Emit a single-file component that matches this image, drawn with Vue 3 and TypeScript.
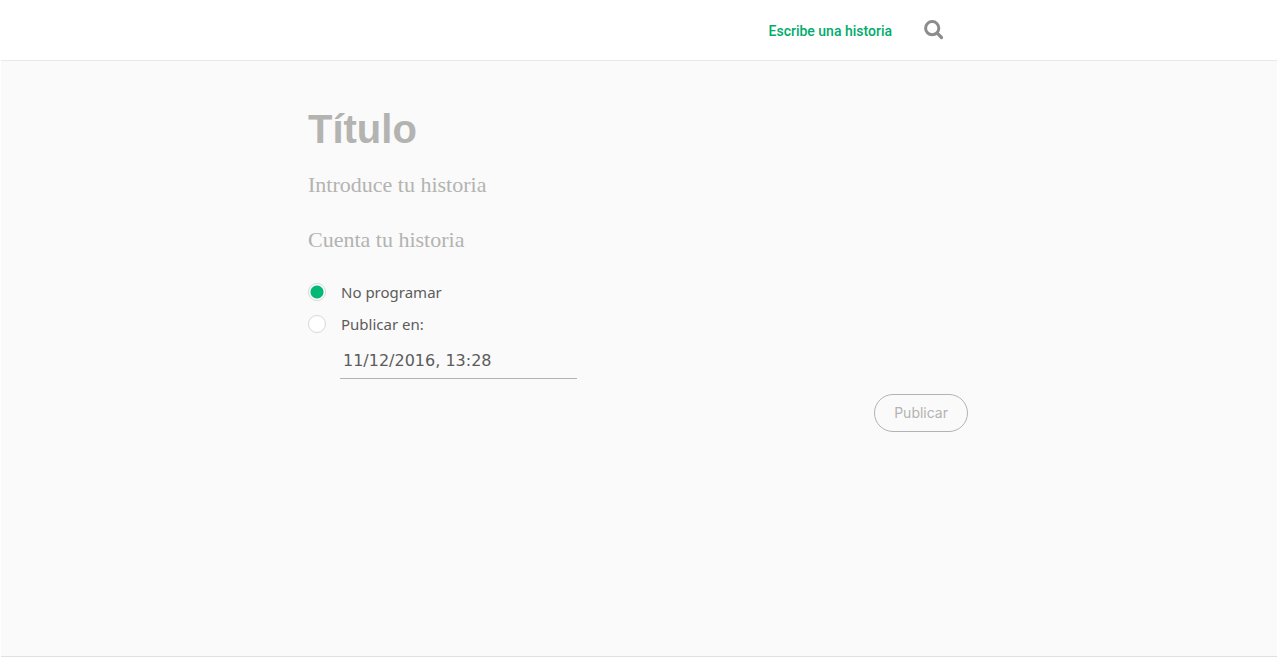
<script setup lang="ts">
import { ref } from 'vue'

const title = ref('')
const intro = ref('')
const story = ref('')
const schedule = ref<'now' | 'later'>('now')
const publishDate = ref('11/12/2016, 13:28')
</script>

<template>
  <div class="page">
    <header class="topbar">
      <nav class="topbar-inner">
        <a class="write-link" href="#">Escribe una historia</a>
        <button class="search" type="button" aria-label="Buscar">
          <svg viewBox="0 0 20 20" width="20" height="20" aria-hidden="true">
            <circle cx="8.2" cy="8.2" r="6.6" fill="none" stroke="#8c8c8c" stroke-width="3" />
            <path d="M13.2 13.2 L17.5 17.5" stroke="#8c8c8c" stroke-width="3.2" stroke-linecap="round" />
          </svg>
        </button>
      </nav>
    </header>

    <main class="content">
      <form class="editor" @submit.prevent>
        <input v-model="title" class="field title" type="text" placeholder="Título" aria-label="Título" />
        <input v-model="intro" class="field prose" type="text" placeholder="Introduce tu historia" aria-label="Introduce tu historia" />
        <input v-model="story" class="field prose" type="text" placeholder="Cuenta tu historia" aria-label="Cuenta tu historia" />

        <div class="options">
          <label class="option">
            <input v-model="schedule" type="radio" name="schedule" value="now" />
            <span>No programar</span>
          </label>
          <label class="option">
            <input v-model="schedule" type="radio" name="schedule" value="later" />
            <span>Publicar en:</span>
          </label>
          <input v-model="publishDate" class="date" type="text" aria-label="Fecha de publicación" />
        </div>

        <button class="publish" type="submit">Publicar</button>
      </form>
    </main>
  </div>
</template>

<style>
body {
  margin: 0;
  background: #fff;
}
</style>

<style scoped>
.page {
  box-sizing: border-box;
  display: flex;
  flex-direction: column;
  min-height: 100vh;
  padding: 0 1px;
  font-family: "Noto Sans", sans-serif;
  color: #5c5c5c;
}

.topbar {
  background: #fff;
  border-bottom: 1px solid #e8e8e8;
}

.topbar-inner {
  box-sizing: border-box;
  display: flex;
  align-items: center;
  justify-content: flex-end;
  gap: 32px;
  max-width: 660px;
  height: 60px;
  margin: 0 auto;
  padding-right: 25px;
}

.write-link {
  padding-top: 2px;
  font: 500 14px/20px Roboto, sans-serif;
  color: #00ab6b;
  text-decoration: none;
}

.search {
  display: flex;
  padding: 0;
  border: 0;
  background: none;
  cursor: pointer;
}

.content {
  flex: 1;
  background: #fafafa;
  border-bottom: 1px solid #e0e0e0;
}

.editor {
  display: flex;
  flex-direction: column;
  max-width: 660px;
  margin: 0 auto;
  padding: 40px 2px 40px 0;
}

.field {
  box-sizing: border-box;
  width: 100%;
  padding: 0;
  border: 0;
  outline: 0;
  background: none;
  color: #5c5c5c;
}

.field::placeholder {
  color: #b3b3b1;
  opacity: 1;
}

.title {
  height: 56px;
  font: 700 40px/56px "Liberation Sans", sans-serif;
}

.prose {
  height: 31px;
  margin-top: 12px;
  font: 400 22px/31px "Liberation Serif", serif;
}

.prose + .prose {
  margin-top: 24px;
}

.options {
  display: flex;
  flex-direction: column;
  margin-top: 21px;
}

.option {
  display: flex;
  align-items: center;
  gap: 15px;
  height: 32px;
  font-size: 15px;
}

.option input {
  appearance: none;
  box-sizing: border-box;
  width: 18px;
  height: 18px;
  margin: 0;
  border: 1px solid #d8d8d8;
  border-radius: 50%;
  background: #fff;
}

.option input:checked {
  background: radial-gradient(circle, #02b875 6px, #fff 7px);
}

.date {
  box-sizing: border-box;
  width: 237px;
  height: 39px;
  margin-left: 32px;
  padding: 2px 3px 0;
  border: 0;
  border-bottom: 1px solid #b3b3b1;
  outline: 0;
  background: none;
  font: 16px/20px "DejaVu Sans", sans-serif;
  color: #5c5c5c;
}

.publish {
  align-self: flex-end;
  height: 38px;
  margin-top: 15px;
  padding: 0 19px;
  border: 1px solid #b3b3b1;
  border-radius: 19px;
  background: none;
  font: 14px/20px Inter, sans-serif;
  color: #b3b3b1;
  cursor: pointer;
}
</style>
